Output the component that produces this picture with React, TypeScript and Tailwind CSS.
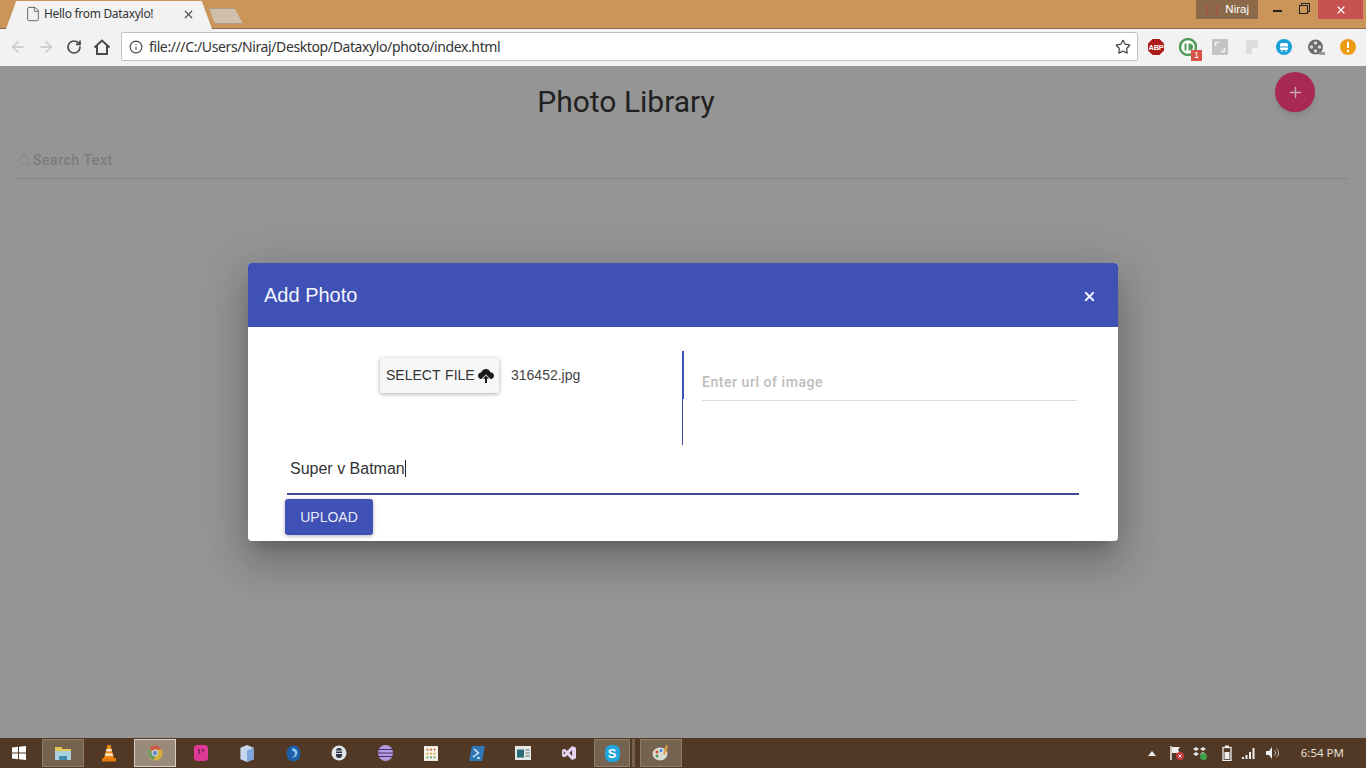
import { ArrowLeft, ArrowRight, RotateCw, Info, Star, File, X, Search, Plus } from 'lucide-react';

function Home() {
  return (
    <svg width="18" height="18" viewBox="0 0 18 18" fill="none" stroke="#4a4a4a" strokeWidth="2">
      <path d="M1.500 9.500 9 2.500l7.500 7" />
      <path d="M4 8v8h10V8" />
    </svg>
  );
}

// cloud with the arrow knocked out of it, as on the select file button
function CloudUp() {
  return (
    <svg width="16" height="15" viewBox="0 0 16 15" fill="#1a1a1a">
      <path d="M8 1c2.200 0 3.800 1.300 4.300 3.200C14.300 4.400 16 5.800 16 7.700 16 9.500 14.500 11 13 11H3C1.500 11 0 9.500 0 7.700 0 5.900 1.500 4.700 3.200 4.500 3.900 2.400 5.800 1 8 1z" />
      <path d="M2.500 12 8 6.500 13.500 12z" fill="#f7f7f7" />
      <path d="M8 7.500 11 10.800H9V15H7V10.800H5z" />
    </svg>
  );
}

const taskIcons = [
  { key: 'files', active: 'soft', svg: <svg width="18" height="18" viewBox="0 0 18 18"><path d="M1 3h6l2 2h8v4H1z" fill="#e8c65a" /><path d="M1 7h16v9H1z" fill="#a9d0dc" /><path d="M5 12h8v4H5z" fill="#3d8fb0" /></svg> },
  { key: 'vlc', svg: <svg width="16" height="18" viewBox="0 0 16 18"><path d="M6.500 1h3l3.500 13H3z" fill="#f08a12" /><path d="M5.700 5h4.600l.6 2.200H5.100zM4.500 9.500h7l.6 2.200H3.900z" fill="#f6f0e4" /><path d="M1 14h14v3.500H1z" fill="#e87a0c" /></svg> },
  { key: 'chrome', active: 'strong', svg: <svg width="16" height="16" viewBox="0 0 18 18"><circle cx="9" cy="9" r="8.500" fill="#d8b13a" /><path d="M9 .5A8.500 8.500 0 0 1 16.400 5H9a4 4 0 0 0-3.600 2.300L2.600 3.500A8.500 8.500 0 0 1 9 .5z" fill="#c9574a" /><path d="M2.600 3.500 6 9.500a4 4 0 0 0 3.600 3l-2.300 4.300A8.500 8.500 0 0 1 2.600 3.500z" fill="#6a9a68" /><circle cx="9" cy="9" r="3.200" fill="#6a8ac8" stroke="#e6e6e6" /></svg> },
  { key: 'pink', svg: <svg width="14" height="16" viewBox="0 0 14 16"><rect x="0" y="0" width="14" height="16" rx="3.500" fill="#de3a95" /><path d="M4 4h2v5H4zM8 4h2v3H8z" fill="#8a2a68" /></svg> },
  { key: 'box', svg: <svg width="14" height="17" viewBox="0 0 14 18"><path d="M7 0 14 3v12l-7 3-7-3V3z" fill="#c4d6ee" /><path d="M7 6 14 3v12l-7 3z" fill="#7fa6dc" /></svg> },
  { key: 'edge', svg: <svg width="15" height="17" viewBox="0 0 16 18"><ellipse cx="8" cy="9" rx="7.500" ry="8.500" fill="#1c5fa8" /><path d="M7 3.500c3.500 0 5.500 2.500 5 5.500-.5 3.500-3.500 5-6 4 2.500-.5 3.800-2 3.500-4-.3-2-1.500-3-3.500-2.800z" fill="#8cc8f0" /></svg> },
  { key: 'disc', svg: <svg width="16" height="16" viewBox="0 0 16 16"><circle cx="8" cy="8" r="7.500" fill="#dfe4ea" /><rect x="5" y="3" width="6" height="10" rx="3" fill="#2b3444" /><path d="M5 6h6M5 8.500h6" stroke="#dfe4ea" /></svg> },
  { key: 'stripes', svg: <svg width="15" height="16" viewBox="0 0 15 16"><ellipse cx="7.500" cy="8" rx="7.500" ry="8" fill="#b49ae0" /><path d="M0 4.500h15M0 8h15M0 11.500h15" stroke="#4a2f70" /></svg> },
  { key: 'grid', svg: <svg width="14" height="15" viewBox="0 0 16 17"><rect width="16" height="17" fill="#f4f1e8" /><path d="M3 3h2v2H3zM7 3h2v2H7zM11 3h2v2h-2z" fill="#c8603a" /><path d="M3 7.500h2v2H3zM7 7.500h2v2H7zM11 7.500h2v2h-2z" fill="#d8a83a" /><path d="M3 12h2v2H3zM7 12h2v2H7zM11 12h2v2h-2z" fill="#4a9a58" /></svg> },
  { key: 'shell', svg: <svg width="16" height="15" viewBox="0 0 16 15"><path d="M3 0h13l-3 15H0z" fill="#2f78b8" /><path d="m5 3 4.500 4L4 11M8 12h3" stroke="#e8f0f8" fill="none" strokeWidth="1.300" /></svg> },
  { key: 'doc', svg: <svg width="16" height="14" viewBox="0 0 16 14"><rect width="16" height="14" fill="#e4e8e6" /><rect x="2" y="3.500" width="7" height="8" fill="#2b6b78" /><path d="M10.500 4h4M10.500 7h4M10.500 10h4" stroke="#5b6a70" /></svg> },
  { key: 'vs', svg: <svg width="14" height="14" viewBox="0 0 16 16"><path d="M11.500 0 16 2v12l-4.500 2-5.500-5.500L2.500 13 0 11.500v-7L2.500 3 6 5.500zM11.500 4.500 8.500 8l3 3.500zM2 6v4l2-2z" fill="#e4d4f4" /></svg> },
];

export default function App() {
  return (
    <div className="w-[1366px] h-[768px] overflow-hidden flex flex-col font-['Liberation_Sans',sans-serif] bg-[#959595]">
      {/* title bar */}
      <div className="h-[29px] shrink-0 bg-[#cb9559] border-b border-[#8a6a48] flex items-start">
        <div className="relative ml-[6px] mt-[1px] w-[206px] h-[28px]">
          <div className="absolute inset-0 bg-[#f2f2f2] [clip-path:polygon(0_100%,5%_0,95%_0,100%_100%)]" />
          <div className="relative h-full flex items-center pl-[19px] pr-[17px] pb-[2px] font-['Noto_Sans',sans-serif] text-[12px] text-[#333]">
            <File size={16} strokeWidth={1.3} className="text-[#555] mr-[3px]" />
            <span className="tracking-[-0.3px]">Hello from Dataxylo!</span>
            <X size={13} strokeWidth={2.2} className="ml-auto text-[#555]" />
          </div>
        </div>
        <div className="ml-[-3px] mt-[8px] w-[34px] h-[16px] bg-[#cfc0ac] border border-[#b39a7c] [clip-path:polygon(0_0,75%_0,100%_100%,18%_100%)]" />
        <div className="ml-auto flex items-start">
          <div className="w-[62px] h-[19px] bg-[#8c6a49] flex items-center justify-between pl-[10px] pr-[9px] text-[11.500px] text-white">
            <span className="w-[12px] h-[11px] border-x-2 border-[#9c5a44]" />
            <span>Niraj</span>
          </div>
          <div className="w-[38px] h-[19px] flex items-center justify-center">
            <span className="w-[9px] h-[2px] bg-[#222] mt-[3px]" />
          </div>
          <div className="w-[22px] h-[19px] flex items-center pl-[3px]">
            <span className="w-[9px] h-[9px] border border-[#222] shadow-[2px_-2px_0_-1px_#cb9559,2px_-2px_0_0_#222]" />
          </div>
          <div className="w-[45px] h-[19px] bg-[#c75050] flex items-center justify-center mr-[3px]">
            <X size={12} strokeWidth={2.4} className="text-white" />
          </div>
        </div>
      </div>

      {/* toolbar */}
      <div className="h-[37px] shrink-0 bg-[#f2f2f2] flex items-center pb-[2px]">
        <div className="w-[121px] flex items-center pl-[9px] gap-[10px]">
          <ArrowLeft size={18} className="text-[#c8c8c8]" />
          <ArrowRight size={18} className="text-[#c8c8c8]" />
          <RotateCw size={16} strokeWidth={2.6} className="text-[#4a4a4a] ml-[1px]" />
          <div className="ml-[1px]"><Home /></div>
        </div>
        <div className="w-[1017px] h-[29px] bg-white border border-[#c2c2c2] rounded-[2px] flex items-center pl-[7px] pr-[6px]">
          <Info size={14} className="text-[#444]" />
          <span className="ml-[6px] text-[14px] text-[#333] font-['Noto_Sans',sans-serif] tracking-[-0.39px]">file:///C:/Users/Niraj/Desktop/Dataxylo/photo/index.html</span>
          <Star size={16} strokeWidth={1.8} className="ml-auto text-[#444]" />
        </div>
        <div className="flex items-center ml-[9px] gap-[14px]">
          <svg width="18" height="18" viewBox="0 0 18 18">
            <path d="M5.500 1h7L17 5.500v7L12.500 17h-7L1 12.500v-7z" fill="#ad1a1a" />
            <text x="9" y="12" textAnchor="middle" fontSize="7.500" fontWeight="700" letterSpacing="-0.3" fill="#fff" fontFamily="Liberation Sans">ABP</text>
          </svg>
          <div className="relative w-[18px] h-[18px]">
            <svg width="18" height="18" viewBox="0 0 18 18">
              <circle cx="9" cy="9" r="8" fill="#fff" stroke="#4f9a58" strokeWidth="2.400" />
              <path d="M6.500 5.500v7" stroke="#4f9a58" strokeWidth="2" />
              <path d="M9.500 5.500h1a3.500 3.500 0 0 1 0 7h-1z" fill="#4f9a58" />
            </svg>
            <span className="absolute right-[-5px] bottom-[-5px] w-[11px] h-[11px] bg-[#d9534a] text-white text-[9px] leading-[11px] text-center">1</span>
          </div>
          <svg width="18" height="18" viewBox="0 0 18 18">
            <rect x="1" y="1" width="16" height="16" rx="1" fill="#c4c4c4" />
            <path d="M4.500 8V4.500H8M13.500 10v3.500H10" stroke="#f2f2f2" strokeWidth="1.500" fill="none" />
          </svg>
          <svg width="18" height="18" viewBox="0 0 18 18">
            <path d="M3 4a2 2 0 0 1 2-2h10v8H9v6H5a2 2 0 0 1-2-2z" fill="#dcdcdc" />
          </svg>
          <svg width="18" height="18" viewBox="0 0 18 18">
            <circle cx="9" cy="9" r="8" fill="#1ba1d8" />
            <rect x="5" y="5" width="8" height="7" rx="1.500" fill="#fff" />
            <path d="M5 9h8" stroke="#1ba1d8" />
            <path d="M6 13h2M10 13h2" stroke="#fff" />
          </svg>
          <svg width="18" height="18" viewBox="0 0 18 18">
            <circle cx="8.500" cy="9" r="7.500" fill="#6a6a6a" />
            <circle cx="8.500" cy="5" r="1.800" fill="#d8d8d8" />
            <circle cx="4.500" cy="9" r="1.800" fill="#d8d8d8" />
            <circle cx="12.500" cy="9" r="1.800" fill="#d8d8d8" />
            <circle cx="8.500" cy="13" r="1.800" fill="#d8d8d8" />
            <path d="M12 14h6v3h-6z" fill="#999" />
          </svg>
          <svg width="18" height="18" viewBox="0 0 18 18">
            <circle cx="9" cy="9" r="8" fill="#ee9a12" />
            <path d="M9 4v6" stroke="#fff" strokeWidth="2" />
            <circle cx="9" cy="13" r="1.200" fill="#fff" />
          </svg>
        </div>
      </div>

      {/* page */}
      <div className="relative flex-1 bg-[#959595] pt-[1px]">
        <div className="flex items-start">
          <h1 className="w-[1252px] text-center font-['Roboto',sans-serif] text-[30px] leading-[40px] mt-[15px] text-[#212121]">Photo Library</h1>
          <button className="ml-[23px] mt-[5px] w-[40px] h-[40px] rounded-full bg-[#a82a52] shadow-md flex items-center justify-center">
            <Plus size={17} className="text-[#c9a7b2]" />
          </button>
        </div>
        <div className="mx-[16px] w-[1332px] mt-[20px] h-[37px] border-b border-[#858585] flex items-center pt-[1px] pl-[2px]">
          <Search size={13} className="text-[#888]" />
          <span className="ml-[2px] font-['Roboto',sans-serif] text-[14px] font-medium tracking-[0.55px] text-[#7c7c7c]">Search Text</span>
        </div>

        {/* modal */}
        <div className="absolute left-0 right-0 top-0">
          <div className="mt-[197px] mx-auto w-[870px] h-[278px] bg-white rounded-[4px] shadow-[0_11px_15px_-7px_rgba(0,0,0,0.2),0_24px_38px_3px_rgba(0,0,0,0.14),0_9px_46px_8px_rgba(0,0,0,0.12)] overflow-hidden">
            <div className="h-[64px] bg-[#3f51b5] flex items-center pl-[16px] pr-[21px] text-[#f2f4fc]">
              <span className="text-[20px]">Add Photo</span>
              <X size={15} strokeWidth={3} className="ml-auto mt-[2px]" />
            </div>
            <div className="pt-[24px]">
              <div className="flex h-[94px]">
                <div className="w-[435px] pl-[132px] pt-[7px] flex items-start">
                  <button className="w-[119px] h-[35px] bg-[#f7f7f7] rounded-[2px] shadow-[0_1px_4px_rgba(0,0,0,0.35)] flex items-center pl-[6px] text-[14px] text-[#333] [word-spacing:1px] whitespace-nowrap">
                    <span className="mr-[3px]">SELECT FILE</span>
                    <CloudUp />
                  </button>
                  <span className="ml-[12px] mt-[8px] text-[14px] leading-[18px] text-[#444]">316452.jpg</span>
                </div>
                <div className="w-[2px] flex flex-col ml-[-1px]">
                  <div className="h-[48px] w-[2px] bg-[#3f51b5]" />
                  <div className="h-[46px] w-[1px] bg-[#3f4f9f]" />
                </div>
                <div className="ml-[18px] w-[375px] h-[50px] border-b border-[#dedede] pt-[22px]">
                  <input
                    placeholder="Enter url of image"
                    className="w-full outline-none font-['Roboto',sans-serif] text-[14px] leading-[18px] block font-medium tracking-[0.55px] placeholder:text-[#bdbdbd]"
                  />
                </div>
              </div>
              <div className="ml-[39px] w-[792px] h-[50px] border-b-2 border-[#3a4a8f] pl-[3px] pt-[14px] text-[16px] leading-[20px] text-[#333]">
                Super v Batman<span className="inline-block w-[1px] h-[17px] bg-[#222] align-[-3px]" />
              </div>
              <button className="ml-[37px] mt-[4px] w-[88px] h-[36px] bg-[#3f51b5] rounded-[3px] text-[14px] text-[#e8ebf7] shadow-[0_1px_4px_rgba(0,0,0,0.3)]">UPLOAD</button>
            </div>
          </div>
        </div>
      </div>

      {/* taskbar */}
      <div className="h-[30px] shrink-0 bg-[#523925] flex items-center">
        <div className="w-[40px] flex justify-center pr-[2px]">
          <svg width="14" height="14" viewBox="0 0 14 14" fill="#fff">
            <path d="M0 1.500 6 .8v5.700H0zM7 .7 14 0v6.500H7zM0 7.500h6v5.700l-6-.7zM7 7.500h7V14l-7-.7z" />
          </svg>
        </div>
        {taskIcons.map((t) => (
          <div key={t.key} className="w-[46px] h-[30px] flex items-center justify-center">
            <div className={t.active === 'strong' ? 'w-[42px] h-[28px] flex items-center justify-center bg-[#9a8a7c] border border-[#d8d0c8]' : t.active === 'soft' ? 'w-[42px] h-[28px] flex items-center justify-center bg-[#75624f] border border-[#8e7e6e]' : 'flex items-center justify-center'}>
              {t.svg}
            </div>
          </div>
        ))}
        <div className="w-[36px] h-[28px] ml-[2px] flex items-center justify-center bg-[#75624f] border border-[#8e7e6e]">
          <span className="w-[15px] h-[17px] rounded-[6px] bg-[#1fa4dc] text-white text-[13px] font-bold leading-[17px] text-center">S</span>
        </div>
        <div className="w-[3px] h-[28px] ml-[2px] bg-[#75624f]" />
        <div className="w-[42px] h-[28px] ml-[5px] flex items-center justify-center bg-[#75624f] border border-[#8e7e6e]">
          <svg width="18" height="18" viewBox="0 0 18 18">
            <ellipse cx="8" cy="10" rx="7.500" ry="6.500" fill="#d8dcd4" />
            <circle cx="5" cy="8" r="1.500" fill="#d84a3a" />
            <circle cx="9" cy="6.500" r="1.500" fill="#3a8ad8" />
            <circle cx="5" cy="12" r="1.500" fill="#4a9a58" />
            <path d="M14 1l2 1-3 9-2-1z" fill="#e0a040" />
          </svg>
        </div>

        <div className="ml-auto flex items-center text-[#e6e0da]">
          <svg width="8" height="5" viewBox="0 0 8 5" className="mr-[13px]">
            <path d="M0 5 4 0l4 5z" fill="#eee" />
          </svg>
          <svg width="16" height="16" viewBox="0 0 16 16" className="mr-[7px]">
            <path d="M2 1v14" stroke="#eee" strokeWidth="1.500" />
            <path d="M3 2h8l-2 3 2 3H3z" fill="#eee" />
            <circle cx="11" cy="11" r="4" fill="#c63a3a" />
            <path d="m9.500 9.500 3 3m0-3-3 3" stroke="#eee" />
          </svg>
          <svg width="16" height="16" viewBox="0 0 16 16" className="mr-[14px]">
            <path d="M4 2 7 4 4 6 1 4zM11 2l3 2-3 2-3-2zM4 7l3 2-3 2-3-2zM11 7l3 2-3 2-3-2z" fill="#e6e6e6" />
            <circle cx="11.500" cy="11.500" r="3.500" fill="#3fa34a" />
          </svg>
          <svg width="10" height="16" viewBox="0 0 10 16" className="mr-[9px]">
            <rect x="1" y="2.500" width="8" height="13" fill="none" stroke="#eee" strokeWidth="1.300" />
            <rect x="3" y="0.500" width="4" height="2" fill="#eee" />
            <rect x="2.500" y="7" width="5" height="7" fill="#eee" />
          </svg>
          <svg width="16" height="14" viewBox="0 0 16 14" className="mr-[8px]">
            <path d="M1 11h2v2H1zM4.500 9h2v4h-2zM8 6h2v7H8zM11.500 2h2v11h-2z" fill="#eee" />
          </svg>
          <svg width="16" height="14" viewBox="0 0 16 14" className="mr-[20px]">
            <path d="M1 5h3l3-4v12L4 9H1z" fill="#eee" />
            <path d="M9.500 4.500a3.500 3.500 0 0 1 0 5M11.500 2.500a6 6 0 0 1 0 9" stroke="#bbb" fill="none" />
          </svg>
          <span className="text-[11.500px] font-['Noto_Sans',sans-serif] mr-[22px]">6:54 PM</span>
        </div>
      </div>
    </div>
  );
}
